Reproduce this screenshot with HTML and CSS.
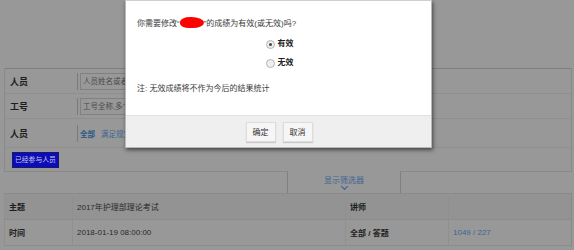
FILE: index.html
```html
<!DOCTYPE html>
<html lang="zh-CN">
<head>
    <meta charset="UTF-8">
    <title>考试成绩</title>
    <link rel="stylesheet" href="styles.css">
</head>
<body>
    <div class="page">
        <div class="filter">
            <div class="frow">
                <div class="flabel">人员</div>
                <div class="fval"><span class="finput">人员姓名或者手机号,多个用逗号分隔</span></div>
            </div>
            <div class="frow">
                <div class="flabel">工号</div>
                <div class="fval"><span class="finput">工号全称,多个用逗号分隔</span></div>
            </div>
            <div class="frow frow-tall">
                <div class="flabel">人员</div>
                <div class="fval">
                    <a class="opt active">全部</a>
                    <a class="opt">满足规定条件的人员</a>
                </div>
            </div>
            <div class="frow frow-last">
                <span class="tag">已经参与人员</span>
            </div>
        </div>

        <div class="tabbar">
            <div class="tab">
                <span>显示筛选器</span>
                <span class="chevron"></span>
            </div>
        </div>

        <table class="info">
            <tr class="dark">
                <td class="th c1">主题</td>
                <td class="c2">2017年护理部理论考试</td>
                <td class="th c3">讲师</td>
                <td></td>
            </tr>
            <tr>
                <td class="th">时间</td>
                <td>2018-01-19 08:00:00</td>
                <td class="th">全部 / 答题</td>
                <td class="num">1049 / 227</td>
            </tr>
        </table>
    </div>

    <!-- modal dialog -->
    <div class="dialog">
        <div class="dlg-body">
            <p class="question">你需要修改“<span class="hidden-name"></span>”的成绩为有效(或无效)吗?</p>
            <div class="options">
                <label class="radio"><span class="dot checked"></span>有效</label>
                <label class="radio"><span class="dot"></span>无效</label>
            </div>
            <p class="note">注: 无效成绩将不作为今后的结果统计</p>
        </div>
        <div class="dlg-foot">
            <button class="btn">确定</button>
            <button class="btn">取消</button>
        </div>
    </div>
</body>
</html>
```

FILE: styles.css
```css
body {
    margin: 0;
    background-color: #989898;
    font-family: "Liberation Sans", "Noto Sans CJK SC", sans-serif;
    font-size: 8px;
    color: #262626;
}

.page {
    padding: 68px 2px 0 4px;
}

/* filter box */
.filter {
    border: 1px solid #8a8a8a;
    border-top-color: #7e7e7e;
}

.frow {
    display: flex;
    align-items: center;
    height: 24px;
    border-bottom: 1px solid #8f8f8f;
}

.frow-tall {
    height: 28px;
}

.frow-last {
    height: 23px;
    border-bottom: none;
    padding-left: 7px;
}

.flabel {
    width: 72px;
    padding-left: 5px;
    box-sizing: border-box;
    font-size: 9px;
    font-weight: bold;
    color: #1e1e1e;
}

.fval {
    display: flex;
    align-items: center;
    gap: 6px;
    height: 17px;
    padding-left: 2px;
    border-left: 1px solid #7a7a7a;
}

.finput {
    display: block;
    width: 260px;
    height: 15px;
    line-height: 15px;
    padding-left: 2px;
    border: 1px solid #818181;
    font-size: 7.5px;
    color: #4a4a4a;
    white-space: nowrap;
    overflow: hidden;
}

.opt {
    font-size: 7.5px;
    color: #3c6590;
}

.opt.active {
    font-weight: bold;
    color: #2a5685;
}

.tag {
    display: inline-block;
    padding: 2px 2px;
    background-color: #0c0cbc;
    border: 1px solid #1a1a60;
    color: #c8c8d8;
    font-size: 6.8px;
    line-height: 10px;
}

/* filter toggle tab */
.tabbar {
    display: flex;
}

.tab {
    margin: -1px 0 0 283px;
    width: 114px;
    height: 22px;
    border-left: 1px solid #808080;
    border-right: 1px solid #808080;
    background-color: #989898;
    display: flex;
    flex-direction: column;
    align-items: center;
    padding-top: 5px;
    box-sizing: border-box;
    color: #3f6690;
    line-height: 9px;
}

.chevron {
    width: 4px;
    height: 4px;
    margin-top: -1px;
    border-right: 1px solid #2f5f98;
    border-bottom: 1px solid #2f5f98;
    transform: rotate(45deg);
}

/* exam info table */
.info {
    width: 568px;
    border-collapse: collapse;
    border: 1px solid #8a8a8a;
}

.info td {
    height: 25px;
    padding: 0 0 0 4px;
    border-bottom: 1px solid #8c8c8c;
    border-left: 1px solid #909090;
    color: #2a2a2a;
    white-space: nowrap;
}

.info tr.dark td {
    background-color: #939393;
}

.info .th {
    font-weight: bold;
    color: #1e1e1e;
}

.c1 { width: 63px; }
.c2 { width: 268px; }
.c3 { width: 98px; }

.info .num {
    color: #3b6592;
}

/* dialog */
.dialog {
    position: absolute;
    left: 125px;
    top: 0;
    width: 305px;
    background-color: #fff;
    border: 1px solid #b8b8b8;
    border-top-color: #cfcfcf;
    box-shadow: 1px 2px 4px rgba(0, 0, 0, 0.55);
}

.dlg-body {
    height: 114px;
    box-sizing: border-box;
    padding: 16px 11px 0;
    color: #3a3a3a;
    line-height: 12px;
}

.question, .note {
    margin: 0;
}

.hidden-name {
    display: inline-block;
    width: 24px;
    height: 11px;
    vertical-align: -2px;
    background-color: #f00;
    border-radius: 45% 55% 50% 40%;
}

.options {
    display: flex;
    flex-direction: column;
    align-items: center;
    gap: 7px;
    margin: 8px 0 14px;
}

.radio {
    display: flex;
    align-items: center;
    gap: 3px;
    font-weight: bold;
    color: #222;
    padding-left: 2px;
}

.dot {
    width: 7px;
    height: 7px;
    border: 1px solid #b4b4b4;
    border-radius: 50%;
    background-color: #eee;
    position: relative;
}

.dot.checked::after {
    content: "";
    position: absolute;
    left: 2px;
    top: 2px;
    width: 3px;
    height: 3px;
    border-radius: 50%;
    background-color: #444;
}

.dlg-foot {
    height: 32px;
    box-sizing: border-box;
    border-top: 1px solid #e2e2e2;
    background-color: #efefef;
    display: flex;
    justify-content: center;
    align-items: center;
    gap: 7px;
    padding-left: 1px;
}

.btn {
    height: 20px;
    padding: 0 6px;
    border: 1px solid #dcdcdc;
    background-color: #f6f6f6;
    box-shadow: 0 1px 1px rgba(0, 0, 0, 0.15);
    font-family: inherit;
    font-size: 8px;
    color: #333;
}
```
